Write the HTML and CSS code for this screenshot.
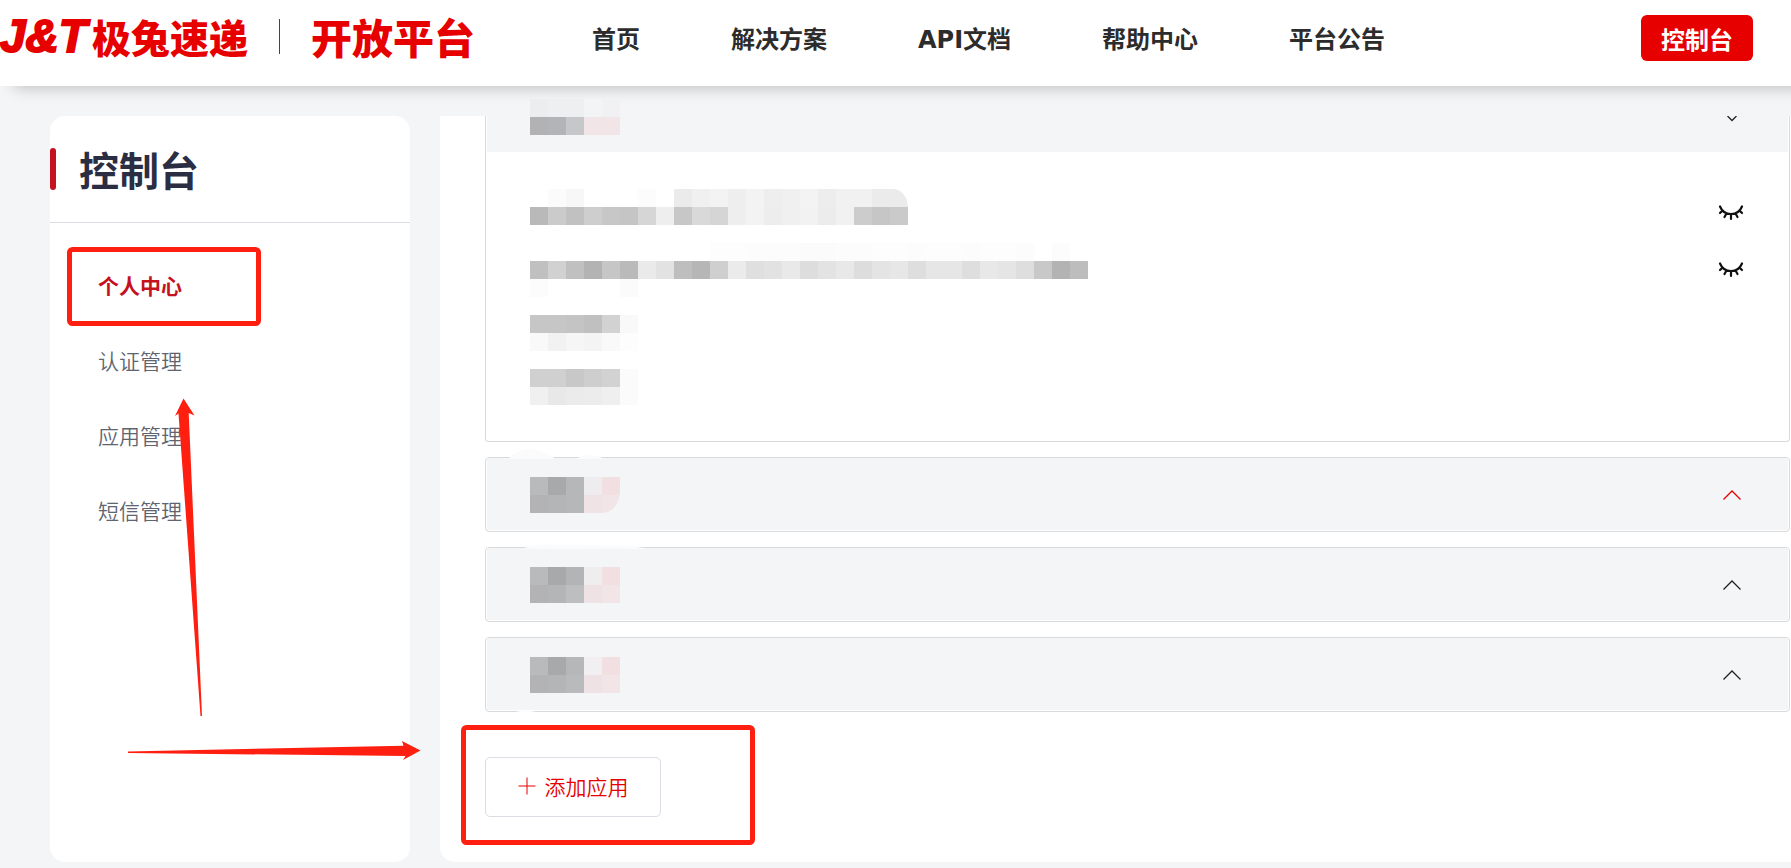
FILE: index.html
```html
<!DOCTYPE html>
<html lang="zh-CN">
<head>
  <meta charset="UTF-8">
  <title>控制台 - 极兔速递开放平台</title>
  <meta name="viewport" content="width=device-width, initial-scale=1">
  <link rel="stylesheet" href="styles.css">
</head>
<body>
  <header class="header">
    <a class="logo" href="#">
      <span class="logo-jt">J&amp;T</span>
      <span class="logo-name">极兔速递</span>
      <span class="logo-line"></span>
      <span class="logo-sub">开放平台</span>
    </a>
    <nav class="nav">
      <a href="#">首页</a>
      <a href="#">解决方案</a>
      <a href="#">API文档</a>
      <a href="#">帮助中心</a>
      <a href="#">平台公告</a>
    </nav>
    <button class="btn-console" type="button">控制台</button>
  </header>

  <div class="layout">
    <aside class="sidebar">
      <h1 class="sidebar-title">控制台</h1>
      <nav class="menu">
        <a class="active" href="#">个人中心</a>
        <a href="#">认证管理</a>
        <a href="#">应用管理</a>
        <a href="#">短信管理</a>
      </nav>
    </aside>

    <main class="content">
      <section class="app open">
        <div class="app-head">
          <div class="mosaic" data-cells="ecedef eeeff1 eeeff1 f3f4f6 f1f1f3 | b2b2b5 b3b4b7 c5c7c9 f2e5e8 f2e5e8"></div>
          <button class="toggle" type="button" aria-label="收起">
            <svg width="18" height="10" viewBox="0 0 18 10"><path d="M4.5 0 L9 4.5 L13.5 0"/></svg>
          </button>
        </div>
        <div class="app-body">
          <div class="row row-end">
            <div class="mosaic cut-top" data-cells="- fb f7 - - - fc - eb f0 f3 ee f3 ee f0 f3 ed f1 f1 eb eb | b9 cb c1 ce c7 c5 d6 ee c7 d9 d5 ee f3 ed f0 f2 ec f1 cc c6 ca"></div>
            <button class="eye" type="button" aria-label="显示">
              <svg width="26" height="24" viewBox="0 0 26 24"><path d="M2 5.5 C6 15.5 20 15.5 24 5.5 M4.5 9.5 L2 12 M8.5 12.5 L6.5 16 M13 13 V18 M17.5 12.5 L19.5 16 M21.5 9.5 L24 12"/></svg>
            </button>
          </div>
          <div class="row">
            <div class="mosaic" data-cells="- - - - - - - - - - fd fd fc fc fc fb fb fc fc fd fd fc fd fd fc fd fd fc - fc - | c0 d1 c0 b3 c6 ba ea e2 be b6 cf eb df e2 e9 dd e3 e8 dd e4 e7 de e6 e6 de e8 e5 de c8 b3 bd | fc - - - - fb - - - - - - - - - - - - - - - - - - - - - - - - -"></div>
            <button class="eye" type="button" aria-label="显示">
              <svg width="26" height="24" viewBox="0 0 26 24"><path d="M2 5.5 C6 15.5 20 15.5 24 5.5 M4.5 9.5 L2 12 M8.5 12.5 L6.5 16 M13 13 V18 M17.5 12.5 L19.5 16 M21.5 9.5 L24 12"/></svg>
            </button>
          </div>
          <div class="row">
            <div class="mosaic" data-cells="c6 c6 c4 c0 d2 f9 | f9 f2 f6 f4 f9 fd"></div>
          </div>
          <div class="row">
            <div class="mosaic" data-cells="d0 d0 c8 ce d2 fb | f0 e8 eb ec ef fb"></div>
          </div>
        </div>
      </section>

      <section class="app">
        <div class="app-head">
          <div class="mosaic cut-bottom" data-cells="b8babc a8a9ab b5b7b9 eeecee f2dfe1 | b3b3b5 b3b5b7 b5b7b9 f0e3e5 f2e5e8"></div>
          <button class="toggle red" type="button" aria-label="展开">
            <svg width="18" height="10" viewBox="0 0 18 10"><path d="M0.5 9.5 L9 1 L17.5 9.5"/></svg>
          </button>
        </div>
      </section>
      <section class="app">
        <div class="app-head">
          <div class="mosaic" data-cells="b8babc a8a9ab b2b4b6 f0edef f2dfe1 | b3b3b5 b3b5b7 bcbec0 efe2e4 f2e5e8"></div>
          <button class="toggle" type="button" aria-label="展开">
            <svg width="18" height="10" viewBox="0 0 18 10"><path d="M0.5 9.5 L9 1 L17.5 9.5"/></svg>
          </button>
        </div>
      </section>
      <section class="app">
        <div class="app-head">
          <div class="mosaic" data-cells="b8babc a8a9ab b5b7b9 f1eff1 f2dfe1 | b3b3b5 b3b5b7 b8babb efe2e4 f2e5e8"></div>
          <button class="toggle" type="button" aria-label="展开">
            <svg width="18" height="10" viewBox="0 0 18 10"><path d="M0.5 9.5 L9 1 L17.5 9.5"/></svg>
          </button>
        </div>
      </section>

      <button class="btn-add" type="button">
        <svg width="18" height="18" viewBox="0 0 18 18"><path d="M9 0.5 V17.5 M0.5 9 H17.5"/></svg>
        添加应用
      </button>
    </main>
  </div>

  <!-- marks over the page: smudges, frames and arrows -->
  <svg class="marks" width="760" height="868" viewBox="0 0 760 868" aria-hidden="true">
    <path class="smudge" d="M508 459 Q518 449 530 449 Q542 450 556 459 Z M576 459 Q590 451 604 459 Z M522 549 Q535 543 560 545 Q640 545 647 549 Z M515 712 Q525 709 536 712 Z"/>
    <rect class="frame" x="69.5" y="249.5" width="189" height="74" rx="3"/>
    <rect class="frame" x="463.5" y="727.5" width="289" height="115" rx="3"/>
    <path class="arrow" d="M183.5 398.5 L194.5 415.5 L188.7 413 L202 716 L200.5 716 L178.5 413.5 L175 416 Z"/>
    <path class="arrow" d="M420.5 750.5 L402 741 L403.5 745.7 L128 751.5 L128 753 L405.5 756 L403 760 Z"/>
  </svg>

  <script>
    // two digits are a grey level, six a full colour, "-" an empty cell
    document.querySelectorAll('.mosaic').forEach((el) => {
      el.dataset.cells.split('|').forEach((line) => {
        const row = document.createElement('div');
        row.className = 'mosaic-row';
        line.trim().split(' ').forEach((c) => {
          const cell = document.createElement('i');
          if (c !== '-') cell.style.backgroundColor = '#' + (c.length === 2 ? c.repeat(3) : c);
          row.appendChild(cell);
        });
        el.appendChild(row);
      });
    });
  </script>
</body>
</html>
```

FILE: styles.css
```css
* {
  box-sizing: border-box;
}
body {
  position: relative;
  margin: 0;
  min-height: 100vh;
  background: #f3f5f7;
  font-family: "Noto Sans CJK SC", sans-serif;
  overflow-x: hidden;
}
a {
  text-decoration: none;
}
button {
  font-family: inherit;
  cursor: pointer;
}
svg {
  display: block;
}

/* header */
.header {
  display: flex;
  align-items: center;
  height: 86px;
  padding: 0 38px 10px 0;
  background: #fff;
  box-shadow: 14px 2px 14px rgba(0, 0, 0, 0.22);
}
.logo {
  display: flex;
  align-items: center;
  width: 476px;
  height: 60px;
  padding-bottom: 4px;
  color: #e60000;
  font-weight: 900;
  line-height: 56px;
  white-space: nowrap;
}
.logo-jt {
  width: 92px;
  font-family: "Liberation Sans", sans-serif;
  font-size: 46px;
  font-weight: 700;
  font-style: italic;
  -webkit-text-stroke: 2px #e60000;
}
.logo-name {
  font-size: 39px;
}
.logo-line {
  width: 1px;
  height: 35px;
  margin: 0 31px 0 31px;
  background: #e60000;
}
.logo-sub {
  font-size: 41px;
}
.nav {
  display: flex;
  gap: 91px;
  margin-left: 116px;
  padding-top: 3px;
}
.nav a {
  color: #2c2c2c;
  font-family: "DejaVu Sans", "Noto Sans CJK SC", sans-serif;
  font-size: 24px;
  font-weight: 700;
  line-height: 36px;
  white-space: nowrap;
}
.btn-console {
  width: 112px;
  height: 46px;
  margin-left: auto;
  padding: 0;
  border: none;
  border-radius: 6px;
  background: #e60000;
  color: #fff;
  font-size: 24px;
  font-weight: 700;
}

/* page columns */
.layout {
  display: flex;
  gap: 30px;
  padding: 30px 0 6px 50px;
}
.sidebar {
  flex: 0 0 360px;
  border-radius: 15px;
  background: #fff;
}
.sidebar-title {
  display: flex;
  align-items: center;
  height: 107px;
  margin: 0;
  border-bottom: 1px solid #dcdee3;
  color: #2b2e43;
  font-size: 40px;
  font-weight: 700;
}
.sidebar-title::before {
  content: "";
  width: 6px;
  height: 42px;
  margin-right: 23px;
  border-radius: 3px;
  background: #c4121f;
}
.menu {
  display: flex;
  flex-direction: column;
  padding: 25px 48px;
}
.menu a {
  color: #5e6470;
  font-size: 21px;
  font-weight: 350;
  line-height: 75px;
}
.menu .active {
  color: #c4121f;
  font-weight: 700;
}

/* application list */
.content {
  flex: 1;
  min-width: 0;
  padding: 0 1px 45px 45px;
  border-radius: 0 0 0 15px;
  background: #fff;
}
.app {
  margin-bottom: 15px;
  padding: 0 1px 1px;
  border: 1px solid #d8d9db;
  border-radius: 4px;
}
.app.open {
  border-top: none;
  border-radius: 0 0 4px 4px;
}
.app-head {
  display: flex;
  align-items: center;
  justify-content: space-between;
  height: 72px;
  padding: 2px 47px 0 43px;
  background: #f3f5f7;
}
.open .app-head {
  align-items: flex-start;
  height: 36px;
  padding-top: 0;
}
/* the first row is scrolled half out of view */
.open .app-head .mosaic {
  margin-top: -17px;
}
.app-body {
  display: flex;
  flex-direction: column;
  gap: 18px;
  padding: 37px 44px 35px 43px;
}
.row {
  display: flex;
  align-items: center;
  justify-content: space-between;
}
.row-end {
  align-items: flex-end;
}
.toggle,
.eye {
  padding: 0;
  border: none;
  background: none;
}
.toggle path {
  fill: none;
  stroke: #222;
  stroke-width: 1.3;
}
.toggle.red path {
  stroke: #e60000;
}
.eye path {
  fill: none;
  stroke: #111;
  stroke-width: 2.2;
  stroke-linecap: round;
}
.mosaic {
  overflow: hidden;
}
.mosaic-row {
  display: flex;
}
.mosaic i {
  width: 18px;
  height: 18px;
}
.cut-top {
  border-top-right-radius: 15px 18px;
}
.cut-bottom {
  border-bottom-right-radius: 17px 22px;
}
.btn-add {
  display: flex;
  align-items: center;
  justify-content: center;
  gap: 9px;
  width: 176px;
  height: 60px;
  margin-top: 45px;
  padding: 0 0 3px;
  border: 1px solid #dcdce6;
  border-radius: 5px;
  background: #fff;
  color: #e60000;
  font-size: 21px;
  font-weight: 350;
}
.btn-add path {
  fill: none;
  stroke: #e60000;
}

.marks {
  position: absolute;
  top: 0;
  left: 0;
  pointer-events: none;
}
.smudge {
  fill: #fbfbfb;
}
.frame {
  fill: none;
  stroke: #ff1f10;
  stroke-width: 5;
}
.arrow {
  fill: #ff1f10;
}
```
